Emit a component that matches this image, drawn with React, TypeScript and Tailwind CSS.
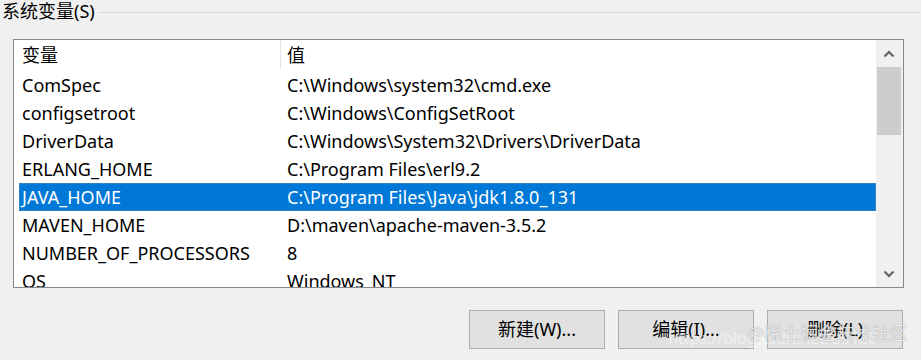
const rows = [
  { name: 'ComSpec', value: 'C:\\Windows\\system32\\cmd.exe' },
  { name: 'configsetroot', value: 'C:\\Windows\\ConfigSetRoot' },
  { name: 'DriverData', value: 'C:\\Windows\\System32\\Drivers\\DriverData' },
  { name: 'ERLANG_HOME', value: 'C:\\Program Files\\erl9.2' },
  { name: 'JAVA_HOME', value: 'C:\\Program Files\\Java\\jdk1.8.0_131', selected: true },
  { name: 'MAVEN_HOME', value: 'D:\\maven\\apache-maven-3.5.2' },
  { name: 'NUMBER_OF_PROCESSORS', value: '8' },
  { name: 'OS', value: 'Windows_NT' },
];

const font = { fontFamily: '"Noto Sans", "Noto Sans CJK SC", sans-serif' };

function Chevron({ up }: { up?: boolean }) {
  return (
    <svg width="12" height="8" viewBox="0 0 12 8">
      <path
        d={up ? 'M1.5 6.5 L6 2 L10.5 6.5' : 'M1.5 1.5 L6 6 L10.5 1.5'}
        fill="none"
        stroke="#606060"
        strokeWidth="2"
      />
    </svg>
  );
}

export default function App() {
  return (
    <div
      className="relative w-[921px] h-[360px] overflow-hidden bg-[#f0f0f0] text-black"
      style={font}
    >
      <div className="flex items-center h-[24px]">
        <span className="pl-[2px] pr-[4px] text-[18px] leading-[24px] -mt-[3px]">系统变量(S)</span>
        <div className="flex-1 h-px bg-[#dcdcdc]" />
      </div>

      <div className="ml-[13px] mt-[15px] w-[891px] h-[249px] border border-[#828790] bg-white flex overflow-hidden">
        <div className="flex-1 flex flex-col pl-[5px]">
          <div className="flex h-[31px] items-center text-[18px] shrink-0">
            <div className="w-[261px] pl-[3px]">变量</div>
            <div className="w-px h-[29px] self-start bg-[#e5e5e5]" />
            <div className="pl-[6px]">值</div>
          </div>
          {rows.map((r) => (
            <div
              key={r.name}
              className={
                r.selected
                  ? 'flex h-[28px] items-center shrink-0 text-[18px] bg-[#0078d7] text-white outline outline-1 outline-dotted outline-[#5a8fb8] -outline-offset-1'
                  : 'flex h-[28px] items-center shrink-0 text-[18px]'
              }
            >
              <div className="w-[268px] pl-[3px] whitespace-nowrap">{r.name}</div>
              <div className="whitespace-nowrap">{r.value}</div>
            </div>
          ))}
        </div>

        <div className="w-[27px] bg-[#f0f0f0] flex flex-col pl-px pr-[2px]">
          <div className="h-[27px] flex items-center justify-center shrink-0">
            <Chevron up />
          </div>
          <div className="h-[68px] bg-[#cdcdcd] shrink-0" />
          <div className="flex-1" />
          <div className="h-[27px] flex items-center justify-center shrink-0">
            <Chevron />
          </div>
        </div>
      </div>

      <div className="flex justify-end gap-[13px] pr-[18px] mt-[22px]">
        {['新建(W)...', '编辑(I)...', '删除(L)'].map((t) => (
          <div
            key={t}
            className="w-[136px] h-[39px] border border-[#adadad] bg-[#e1e1e1] flex items-center justify-center text-[18px]"
          >
            {t}
          </div>
        ))}
      </div>

      <div className="absolute left-[668px] top-[326px] text-[16px] text-white/50 whitespace-nowrap">
        https://blog.csdn.net/u0126
      </div>
      <div
        className="absolute left-[748px] top-[320px] text-[18px] text-white/80 whitespace-nowrap"
        style={{ textShadow: '0 0 1px rgba(0,0,0,0.45)' }}
      >
        @稀土掘金技术社区
      </div>
    </div>
  );
}
